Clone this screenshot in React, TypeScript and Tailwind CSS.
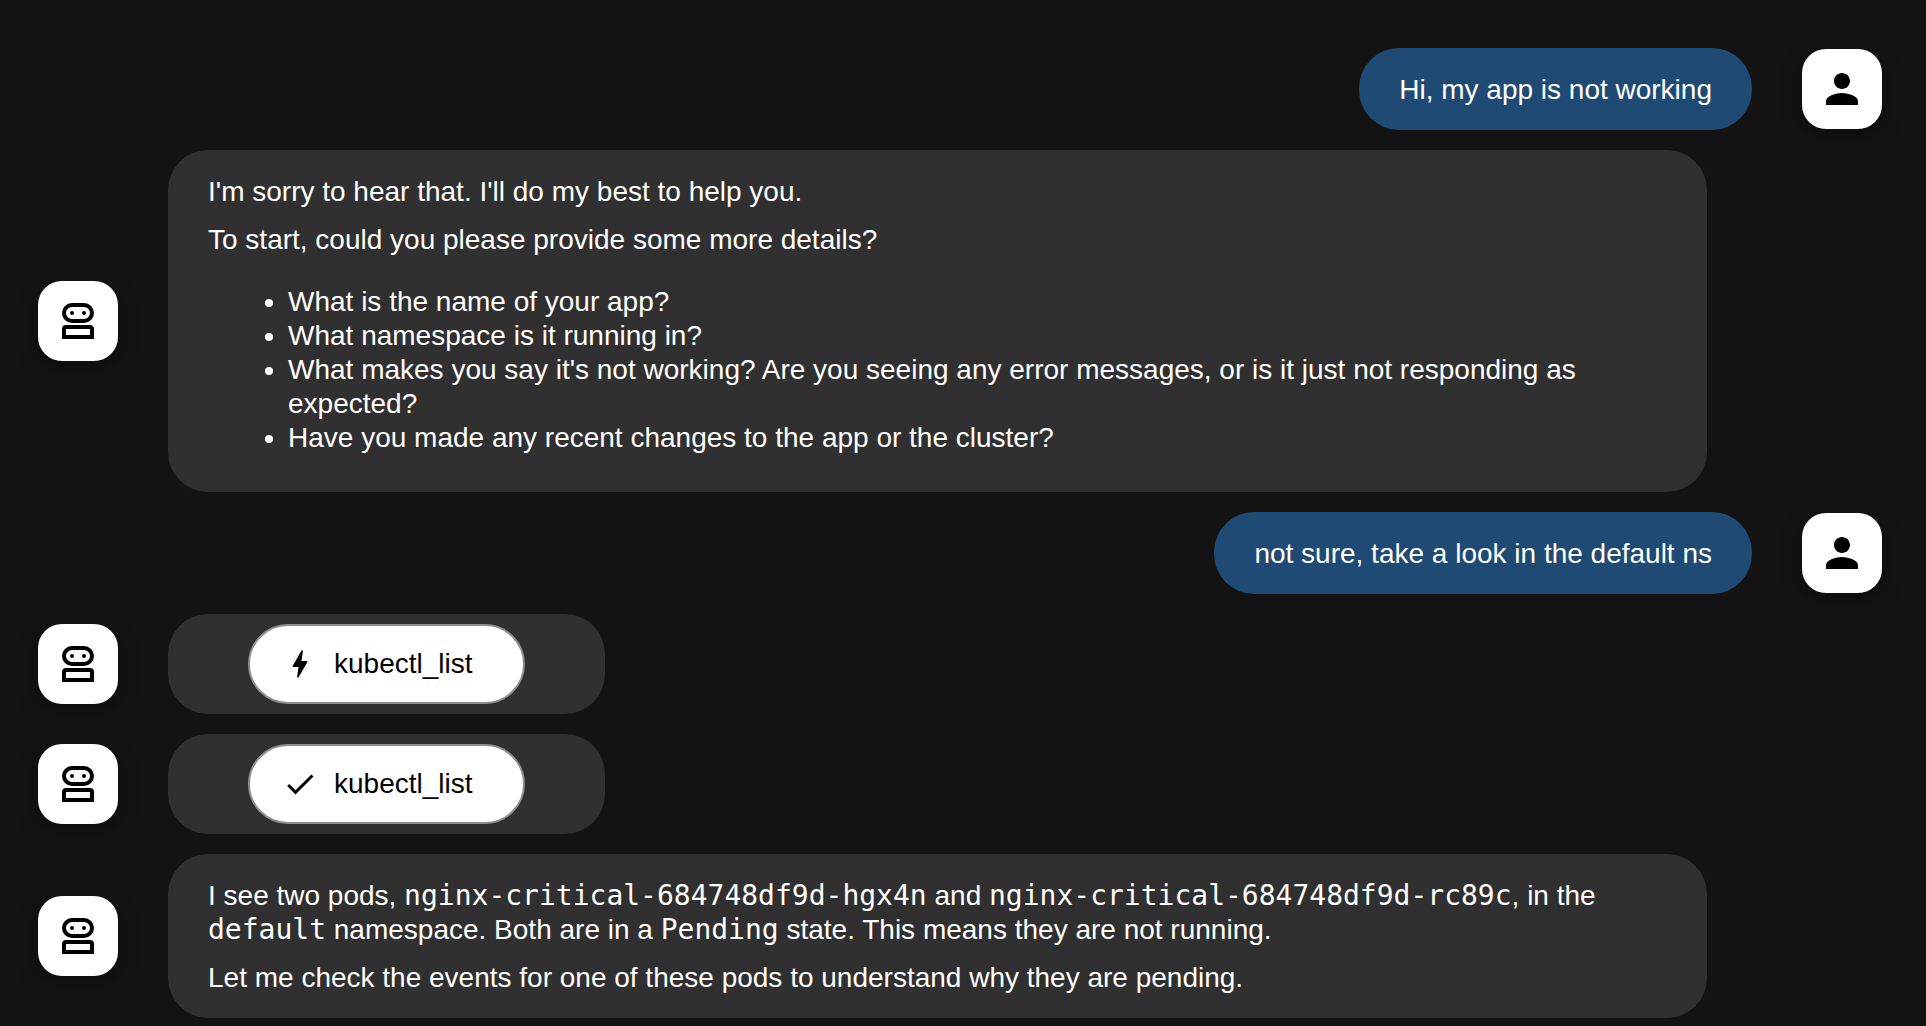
import type { ReactNode } from "react";

function RobotIcon() {
  return (
    <svg viewBox="0 0 24 24" className="size-12" fill="none" stroke="currentColor" strokeWidth={2} aria-hidden="true">
      <rect x="5" y="4" width="14" height="8" rx="4" />
      <circle cx="9" cy="8" r="1" fill="currentColor" stroke="none" />
      <circle cx="15" cy="8" r="1" fill="currentColor" stroke="none" />
      <path fill="currentColor" stroke="none" fillRule="evenodd" d="M6 14h12a2 2 0 0 1 2 2v5H4v-5a2 2 0 0 1 2-2zM6 16v3h12v-3z" />
    </svg>
  );
}

function PersonIcon() {
  return (
    <svg viewBox="0 0 24 24" className="size-12" fill="currentColor" aria-hidden="true">
      <path d="M12 12c2.21 0 4-1.79 4-4s-1.79-4-4-4-4 1.79-4 4 1.79 4 4 4zm0 2c-2.67 0-8 1.34-8 4v2h16v-2c0-2.66-5.33-4-8-4z" />
    </svg>
  );
}

function BoltIcon() {
  return (
    <svg viewBox="0 0 24 24" className="size-9" fill="currentColor" aria-hidden="true">
      <path d="M11 21h-1l1-7H7.500c-.58 0-.57-.32-.38-.66.19-.34.05-.08.07-.12C8.480 10.940 10.420 7.540 13 3h1l-1 7h3.500c.49 0 .56.33.47.51l-.07.15C12.960 17.550 11 21 11 21z" />
    </svg>
  );
}

function CheckIcon() {
  return (
    <svg viewBox="0 0 24 24" className="size-9" fill="currentColor" aria-hidden="true">
      <path d="M9 16.170 4.830 12l-1.420 1.410L9 19 21 7l-1.410-1.410z" />
    </svg>
  );
}

function Avatar({ label, children }: { label: string; children: ReactNode }) {
  return (
    <div
      role="img"
      aria-label={label}
      className="flex size-20 shrink-0 items-center justify-center rounded-3xl bg-white text-black shadow-[0_6px_20px_rgba(0,0,0,0.35)]"
    >
      {children}
    </div>
  );
}

function UserMessage({ children }: { children: ReactNode }) {
  return (
    <div className="flex items-center justify-end gap-[50px]">
      <div className="rounded-[40px] bg-[#1f4a73] px-10 pt-[25px] pb-[23px]">{children}</div>
      <Avatar label="User">
        <PersonIcon />
      </Avatar>
    </div>
  );
}

function BotMessage({ children }: { children: ReactNode }) {
  return (
    <div className="mr-[175px] flex items-center gap-[50px]">
      <Avatar label="Assistant">
        <RobotIcon />
      </Avatar>
      {children}
    </div>
  );
}

function BotText({ children }: { children: ReactNode }) {
  return <div className="min-w-0 flex-1 rounded-[40px] bg-[#303030] px-10 pt-[25px] pb-[23px]">{children}</div>;
}

function ToolCall({ name, icon }: { name: string; icon: ReactNode }) {
  return (
    <BotMessage>
      <div className="rounded-[40px] bg-[#303030] px-20 py-[10px]">
        <button
          type="button"
          className="flex h-20 items-center gap-4 rounded-full border-2 border-[#8e8e93] bg-white pr-[50px] pl-8 text-black"
        >
          {icon}
          {name}
        </button>
      </div>
    </BotMessage>
  );
}

function Code({ children }: { children: ReactNode }) {
  return <code className="font-['DejaVu_Sans_Mono',monospace] text-[28px] leading-none">{children}</code>;
}

export default function App() {
  return (
    <main className="flex min-h-screen flex-col gap-5 bg-[#131313] pt-12 pr-11 pb-2 pl-[38px] font-['Liberation_Sans',Arial,sans-serif] text-[28px] leading-[34px] text-white">
      <UserMessage>Hi, my app is not working</UserMessage>

      <BotMessage>
        <BotText>
          <p>I'm sorry to hear that. I'll do my best to help you.</p>
          <p className="mt-[14px]">To start, could you please provide some more details?</p>
          <ul className="mt-7 mb-[14px] list-disc pl-20">
            <li>What is the name of your app?</li>
            <li>What namespace is it running in?</li>
            <li>
              What makes you say it's not working? Are you seeing any error messages, or is it just not responding as
              expected?
            </li>
            <li>Have you made any recent changes to the app or the cluster?</li>
          </ul>
        </BotText>
      </BotMessage>

      <UserMessage>not sure, take a look in the default ns</UserMessage>

      <ToolCall name="kubectl_list" icon={<BoltIcon />} />
      <ToolCall name="kubectl_list" icon={<CheckIcon />} />

      <BotMessage>
        <BotText>
          <p>
            I see two pods, <Code>nginx-critical-684748df9d-hgx4n</Code> and{" "}
            <Code>nginx-critical-684748df9d-rc89c</Code>, in the <Code>default</Code> namespace. Both are in a{" "}
            <Code>Pending</Code> state. This means they are not running.
          </p>
          <p className="mt-[14px]">
            Let me check the events for one of these pods to understand why they are pending.
          </p>
        </BotText>
      </BotMessage>
    </main>
  );
}
